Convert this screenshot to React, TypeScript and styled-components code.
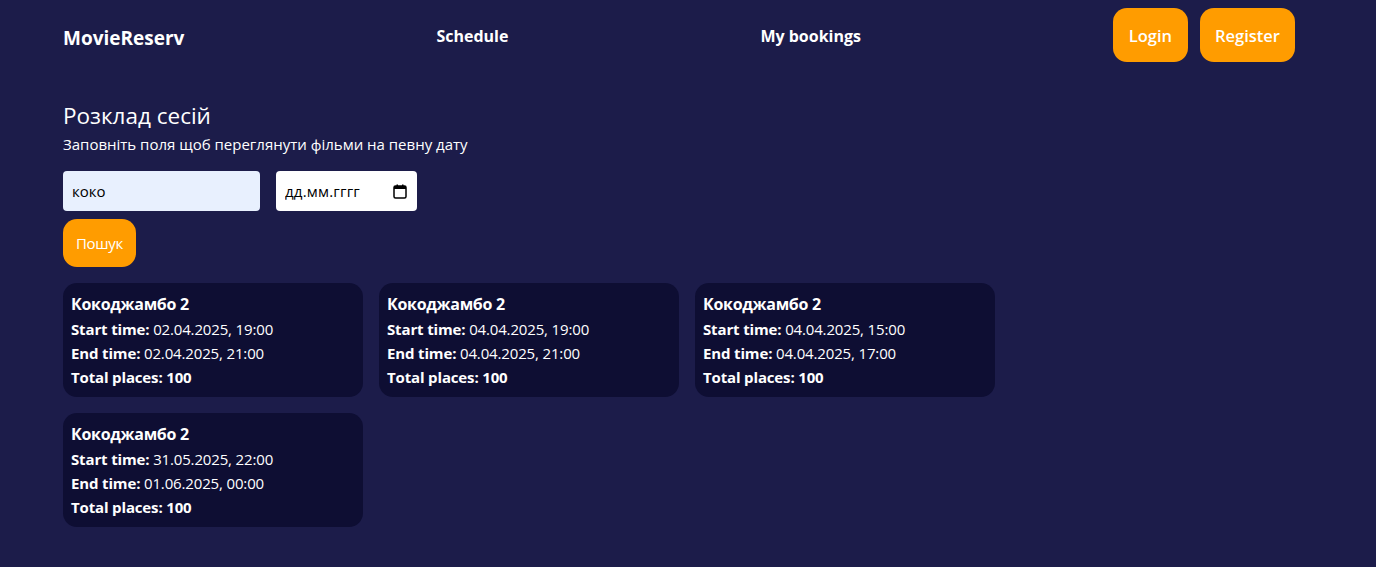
import React from "react";
import styled, { createGlobalStyle } from "styled-components";

const Global = createGlobalStyle`
  html, body { margin: 0; padding: 0; }
  body {
    background: #1c1c4a;
    color: #ffffff;
    font-family: "Open Sans", "Noto Sans", sans-serif;
    min-height: 567px;
  }
`;

const Page = styled.div`
  padding: 0 81px 0 63px;
`;

const Nav = styled.nav`
  display: flex;
  align-items: center;
  justify-content: space-between;
  height: 70px;
`;

const Logo = styled.div`
  font-size: 19px;
  font-weight: 700;
  margin-top: 5px;
`;

const NavLink = styled.a`
  font-size: 16px;
  font-weight: 700;
  color: #fff;
  text-decoration: none;
  margin-top: 1px;
`;

const AuthGroup = styled.div`
  display: flex;
  gap: 12px;
`;

const OrangeButton = styled.button<{ $h?: number; $w?: number; $weight?: number }>`
  background: #ff9c00;
  color: #fff;
  border: none;
  border-radius: 14px;
  height: ${(p) => p.$h ?? 54}px;
  width: ${(p) => p.$w ?? 75}px;
  font-family: inherit;
  font-size: ${(p) => (p.$weight === 400 ? 15 : 16.5)}px;
  font-weight: ${(p) => p.$weight ?? 600};
  letter-spacing: ${(p) => (p.$weight === 400 ? -0.3 : 0)}px;
  cursor: pointer;
  padding: 0;
`;

const Main = styled.main`
  padding-top: 31px;
`;

const Title = styled.h1`
  font-size: 22.5px;
  font-weight: 400;
  margin: 0;
  line-height: 30px;
`;

const Subtitle = styled.p`
  font-size: 15px;
  margin: 2px 0 0;
  line-height: 22px;
`;

const Form = styled.div`
  display: flex;
  flex-direction: column;
  align-items: flex-start;
  gap: 8px;
  margin-top: 16px;
`;

const Inputs = styled.div`
  display: flex;
  gap: 16px;
`;

const TextInput = styled.input`
  box-sizing: border-box;
  width: 197px;
  height: 40px;
  border: none;
  border-radius: 4px;
  background: #e8f0fe;
  padding: 0 9px;
  font-family: inherit;
  font-size: 15px;
  color: #000;
  outline: none;
`;

const DateBox = styled.label`
  box-sizing: border-box;
  width: 141px;
  height: 40px;
  border-radius: 4px;
  background: #fff;
  display: flex;
  align-items: center;
  justify-content: space-between;
  padding: 0 10px 0 9px;
  color: #000;
`;

const DateInput = styled.input`
  border: none;
  outline: none;
  width: 100px;
  padding: 0;
  font-family: inherit;
  font-size: 15px;
  letter-spacing: 0.2px;
  background: transparent;
  &::placeholder { color: #000; opacity: 1; }
`;

const Cards = styled.div`
  display: grid;
  grid-template-columns: repeat(3, 300px);
  gap: 16px;
  margin-top: 16px;
`;

const Card = styled.div`
  background: #0e0e33;
  border-radius: 14px;
  padding: 9px 8px 8px;
  box-sizing: border-box;
`;

const CardTitle = styled.div`
  font-size: 16px;
  font-weight: 700;
  line-height: 25px;
  letter-spacing: -0.3px;
`;

const CardLine = styled.div`
  font-size: 15px;
  line-height: 24px;
  letter-spacing: -0.15px;
  b { font-weight: 700; }
`;

const sessions = [
  { start: "02.04.2025, 19:00", end: "02.04.2025, 21:00" },
  { start: "04.04.2025, 19:00", end: "04.04.2025, 21:00" },
  { start: "04.04.2025, 15:00", end: "04.04.2025, 17:00" },
  { start: "31.05.2025, 22:00", end: "01.06.2025, 00:00" },
];

const CalendarIcon = () => (
  <svg width="14" height="15" viewBox="0 0 14 15">
    <rect x="1" y="2" width="12" height="12" rx="1.5" fill="none" stroke="#000" strokeWidth="1.5" />
    <rect x="1" y="2" width="12" height="3" fill="#000" />
    <rect x="3.5" y="0.5" width="1.5" height="3" fill="#000" />
    <rect x="9" y="0.5" width="1.5" height="3" fill="#000" />
  </svg>
);

export default function App() {
  return (
    <>
      <Global />
      <Page>
        <Nav>
          <Logo>MovieReserv</Logo>
          <NavLink href="#">Schedule</NavLink>
          <NavLink href="#">My bookings</NavLink>
          <AuthGroup>
            <OrangeButton $w={75}>Login</OrangeButton>
            <OrangeButton $w={95}>Register</OrangeButton>
          </AuthGroup>
        </Nav>
        <Main>
          <Title>Розклад сесій</Title>
          <Subtitle>Заповніть поля щоб переглянути фільми на певну дату</Subtitle>
          <Form>
            <Inputs>
              <TextInput defaultValue="коко" />
              <DateBox>
                <DateInput placeholder="дд.мм.гггг" />
                <CalendarIcon />
              </DateBox>
            </Inputs>
            <OrangeButton $w={73} $h={48} $weight={400}>Пошук</OrangeButton>
          </Form>
          <Cards>
            {sessions.map((s, i) => (
              <Card key={i}>
                <CardTitle>Кокоджамбо 2</CardTitle>
                <CardLine><b>Start time:</b> {s.start}</CardLine>
                <CardLine><b>End time:</b> {s.end}</CardLine>
                <CardLine><b>Total places: 100</b></CardLine>
              </Card>
            ))}
          </Cards>
        </Main>
      </Page>
    </>
  );
}
